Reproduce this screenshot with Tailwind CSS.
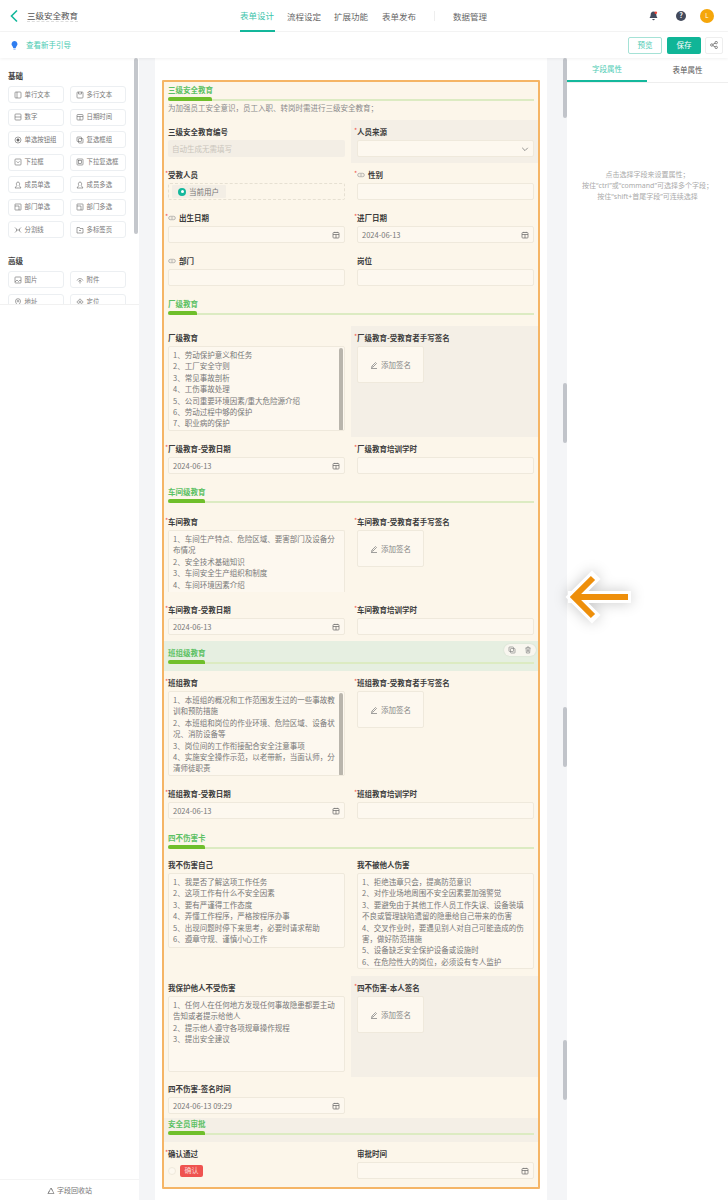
<!DOCTYPE html>
<html lang="zh">
<head>
  <meta charset="UTF-8" />
  <title>三级安全教育</title>
  <script src="https://cdn.jsdelivr.net/npm/@tailwindcss/browser@4"></script>
</head>
<body class="relative h-[1200px] overflow-hidden bg-white font-['Noto_Sans_CJK_SC','Noto_Sans',sans-serif] text-[#444]">

  <!-- top nav -->
  <header class="relative flex h-[32px] items-center border-b border-[#f5f5f5]">
    <svg class="ml-[9px] h-[14px] w-[10px]" viewBox="0 0 10 14" fill="none" stroke="#14b89c" stroke-width="1.6"><path d="M8 1.5 2.5 7 8 12.5"/></svg>
    <span class="ml-[8px] border-b border-dashed border-[#ddd] text-[8.5px] leading-[11px] text-[#555]">三级安全教育</span>
    <nav class="absolute left-[240px] top-0 flex h-[32px] items-center text-[8.5px] text-[#666]">
      <span class="flex h-[32px] w-[35px] items-center border-b-2 border-[#14b89c] whitespace-nowrap text-[#3cc4ab]">表单设计</span>
      <span class="ml-[12px] whitespace-nowrap">流程设定</span>
      <span class="ml-[13px] whitespace-nowrap">扩展功能</span>
      <span class="ml-[14px] whitespace-nowrap">表单发布</span>
      <span class="ml-[18px] h-[10px] w-px bg-[#eee]"></span>
      <span class="ml-[18px] whitespace-nowrap">数据管理</span>
    </nav>
    <div class="ml-auto mr-[14px] flex items-center">
      <svg class="h-[10px] w-[9px]" viewBox="0 0 9 10"><path d="M4.5.6C2.6.6 1.700 2 1.700 3.600c0 2-.9 2.800-1.200 3.400h8c-.3-.6-1.200-1.400-1.200-3.400C7.300 2 6.400.6 4.500.6ZM3.300 8a1.200 1.200 0 0 0 2.400 0Z" fill="#434a5c"/><circle cx="6.800" cy="1.800" r="1.300" fill="#f04134"/></svg>
      <span class="ml-[18px] flex h-[10px] w-[10px] items-center justify-center rounded-full bg-[#434a5c] text-[7px] font-bold leading-none text-white">?</span>
      <span class="ml-[14px] flex h-[14px] w-[14px] items-center justify-center rounded-full bg-[#f5a60a] text-[6px] text-white">L</span>
    </div>
  </header>

  <!-- sub bar -->
  <div class="relative z-10 flex h-[26px] items-center bg-white shadow-[0_1px_3px_rgba(0,0,0,0.06)]">
    <svg class="ml-[11px] h-[9px] w-[7px]" viewBox="0 0 7 9"><path d="M3.500 0a3 3 0 0 1 2 5.200L4.700 7H2.300L1.500 5.200A3 3 0 0 1 3.500 0Z" fill="#2f7df0"/><rect x="2.400" y="7.500" width="2.200" height="1.200" fill="#8ab4f0"/></svg>
    <span class="ml-[8px] text-[7.500px] text-[#4ccbb3]">查看新手引导</span>
    <div class="ml-auto mr-[5px] flex items-center">
      <span class="flex h-[17px] w-[34px] items-center justify-center rounded-[2px] border border-[#a5e2d6] text-[7.500px] text-[#4ccbb3]">预览</span>
      <span class="ml-[5px] flex h-[17px] w-[34px] items-center justify-center rounded-[2px] bg-[#10b597] text-[7.500px] text-white">保存</span>
      <span class="ml-[4px] flex h-[17px] w-[18px] items-center justify-center rounded-[2px] border border-[#eee]">
        <svg class="h-[8px] w-[8px]" viewBox="0 0 8 8" fill="none" stroke="#666" stroke-width=".8"><circle cx="1.800" cy="4" r="1.200"/><circle cx="6.200" cy="1.600" r="1.200"/><circle cx="6.200" cy="6.400" r="1.200"/><path d="M2.900 3.400 5.100 2.200M2.900 4.600l2.200 1.200"/></svg>
      </span>
    </div>
  </div>

  <main class="flex h-[1142px]">
    <!-- left panel -->
    <aside class="relative flex w-[139px] shrink-0 flex-col bg-white">
      <div class="h-[247px] overflow-hidden border-b border-[#f1f1f1] pl-[8px]">
        <h3 class="mt-[12px] h-[12px] text-[7.500px] font-bold leading-[12px] text-[#444]">基础</h3>
        <div id="basic" class="mt-[4px] grid w-[118px] grid-cols-[56px_56px] gap-x-[6px] gap-y-[5.500px]"></div>
        <h3 class="mt-[17px] h-[12px] text-[7.500px] font-bold leading-[12px] text-[#444]">高级</h3>
        <div id="advanced" class="mt-[4px] grid w-[118px] grid-cols-[56px_56px] gap-x-[6px] gap-y-[5.500px]"></div>
      </div>
      <span class="absolute right-[1px] top-0 h-[176px] w-[4px] rounded-full bg-[#c4c7cc]"></span>
      <div class="mt-auto flex h-[21px] items-center justify-center border-t border-[#f4f4f4] pt-[1px] text-[7px] text-[#777]">
        <svg class="mr-[2px] h-[8px] w-[8px]" viewBox="0 0 8 8" fill="none" stroke="#777" stroke-width=".7"><path d="M4 1 1 6.500h6ZM4 1l1.500 2.600M1 6.500l1.500-2.600"/></svg>字段回收站
      </div>
    </aside>

    <!-- canvas -->
    <section class="relative w-[428px] shrink-0 bg-[#f4f5f7] pl-[16px] pr-[20px]">
      <div class="h-full w-[392px] bg-white pl-[7px] pt-[22px]">
        <div id="form" class="w-[378px] rounded-[1px] border-2 border-[#f5b566] bg-[#fcf6ea]"></div>
      </div>
      <span class="absolute right-0 top-0 h-[60px] w-[4px] rounded-full bg-[#c1c4ca]"></span>
      <span class="absolute right-0 top-[325px] h-[60px] w-[4px] rounded-full bg-[#c1c4ca]"></span>
      <span class="absolute right-0 top-[649px] h-[60px] w-[4px] rounded-full bg-[#c1c4ca]"></span>
      <span class="absolute right-0 top-[982px] h-[60px] w-[4px] rounded-full bg-[#c1c4ca]"></span>
    </section>

    <!-- right panel -->
    <aside class="flex-1 bg-white">
      <div class="flex h-[25px] border-b border-[#eee] text-[7.500px]">
        <span class="flex w-[80px] items-center justify-center border-b-2 border-[#14b89c] text-[#4ccbb3]">字段属性</span>
        <span class="flex w-[81px] items-center justify-center text-[#555]">表单属性</span>
      </div>
      <p class="mt-[86px] whitespace-nowrap text-center font-['Noto_Sans','Noto_Sans_CJK_SC',sans-serif] text-[7px] leading-[11px] text-[#aaa]">点击选择字段来设置属性；<br>按住“ctrl”或“command”可选择多个字段；<br>按住“shift+首尾字段”可连续选择</p>
    </aside>
  </main>

  <!-- callout arrow over the screenshot -->
  <svg class="absolute left-[555px] top-[560px] h-[70px] w-[100px] overflow-visible" viewBox="0 0 100 70" fill="none">
    <path d="M37 19 19 37 37 55M19 37H70" stroke="#fff" stroke-width="12" stroke-linecap="square" style="filter:drop-shadow(0 0 7px rgba(0,0,0,.22))"/>
    <path d="M38 18 19 37 38 56M19 37H73" stroke="#ee8f0b" stroke-width="6"/>
  </svg>

  <script>
    const icons = {
      text: '<rect x="1" y="1" width="6" height="6" rx=".8"/><path d="M3 1v6"/>',
      area: '<rect x="1" y="1" width="6" height="6" rx=".8"/><path d="M2.500 1v2h3V1"/>',
      num: '<rect x="1" y="1" width="6" height="6" rx=".8"/><path d="M1 4h6"/>',
      date: '<rect x="1" y="1.500" width="6" height="5.500" rx=".8"/><path d="M1 3.500h6M4 3.500V7"/>',
      radio: '<circle cx="4" cy="4" r="3"/><circle cx="4" cy="4" r="1.200" fill="#666"/>',
      check: '<rect x="1" y="1" width="4.500" height="4.500" rx=".6"/><rect x="2.500" y="2.500" width="4.500" height="4.500" rx=".6"/>',
      select: '<rect x="1" y="1" width="6" height="6" rx=".8"/><path d="m2.500 3.300 1.500 1.500 1.500-1.500"/>',
      mselect: '<rect x="1" y="1" width="6" height="6" rx=".8"/><rect x="2.500" y="2.500" width="3" height="3"/>',
      user: '<path d="M2.800 4.500C2 3 2.300 1 4 1s2 2 1.200 3.500L7 7H1Z"/>',
      dept: '<rect x="1" y="1" width="6" height="6" rx=".4"/><path d="M1 3h4v4"/>',
      line: '<path d="M1 1.500 2.500 3v2L1 6.500M7 1.500 5.500 3v2L7 6.500M2.500 4h3"/>',
      tabs: '<path d="M1 1.500h2.500l.5 1h3V7H1Z"/><path d="M3 4.500h2"/>',
      image: '<rect x="1" y="1" width="6" height="6" rx=".6"/><path d="m1 6 2-2 1.500 1.500L6 4l1 1"/>',
      attach: '<path d="M1 4.500c1-2.500 5-2.500 6 0M2.500 5.500c.7-1.300 2.300-1.300 3 0M4 4v3.500"/>',
      addr: '<path d="M4 7.500C2.500 5.800 1.500 4.600 1.500 3.200a2.500 2.500 0 0 1 5 0C6.500 4.600 5.500 5.800 4 7.500Z"/><circle cx="4" cy="3.200" r=".8"/>',
      locate: '<path d="m4 .8 3.200 3.200L4 7.200.8 4Z"/><circle cx="4" cy="4" r="1"/>'
    };

    function paletteItem([name, icon]) {
      return `<div class="flex h-[17px] items-center rounded-[3px] border border-[#eceff2] pl-[5px] text-[6.400px] text-[#777]">
        <svg class="mr-[2.500px] h-[8px] w-[8px] shrink-0" viewBox="0 0 8 8" fill="none" stroke="#666" stroke-width=".6">${icons[icon]}</svg>
        <span class="whitespace-nowrap">${name}</span></div>`;
    }

    document.getElementById("basic").innerHTML = [
      ["单行文本", "text"], ["多行文本", "area"], ["数字", "num"], ["日期时间", "date"],
      ["单选按钮组", "radio"], ["复选框组", "check"], ["下拉框", "select"], ["下拉复选框", "mselect"],
      ["成员单选", "user"], ["成员多选", "user"], ["部门单选", "dept"], ["部门多选", "dept"],
      ["分割线", "line"], ["多标签页", "tabs"]
    ].map(paletteItem).join("");

    document.getElementById("advanced").innerHTML = [
      ["图片", "image"], ["附件", "attach"], ["地址", "addr"], ["定位", "locate"]
    ].map(paletteItem).join("");

    const calIcon = `<svg class="absolute right-[4px] top-[4px] h-[8px] w-[8px]" viewBox="0 0 8 8" fill="none" stroke="#666" stroke-width=".7"><rect x="1" y="1.500" width="6" height="5.500" rx=".8"/><path d="M1 3.500h6M4 3.500V7M2.800.8v1M5.200.8v1"/></svg>`;
    const linkIcon = `<svg class="mr-[3px] h-[8px] w-[8px]" viewBox="0 0 8 8" fill="none" stroke="#999" stroke-width=".7"><rect x=".7" y="2.300" width="6.600" height="3.400" rx="1.700"/><path d="M2.800 4h2.400"/></svg>`;

    function label(text, req, link) {
      return `<div class="relative flex h-[11px] items-center whitespace-nowrap text-[7.500px] font-bold text-[#3d3d3d]">
        ${req ? '<span class="absolute left-[-3px] top-[-1px] text-[7px] font-normal text-[#f0584c]">*</span>' : ''}
        ${link ? linkIcon : ''}${text}</div>`;
    }

    function cellWrap(side, height, hl, inner) {
      const pad = side === "l" ? "pl-[4px] pr-[6px]" : "pl-[6px] pr-[4px]";
      return `<div class="${height} ${pad} ${hl ? "bg-[#f4efe6]" : ""} pt-[6px]">${inner}</div>`;
    }

    const box = "relative mt-[3px] h-[17px] rounded-[2px] border border-[#efe9dc] bg-[#fdf8ef] text-[7.500px] leading-[15px]";

    const field = (side, text, o = {}) => cellWrap(side, "h-[43px]", o.hl, label(text, o.req, o.link) +
      `<div class="${box} pl-[4px] text-[#777]">${o.value || ""}${o.date ? calIcon : ""}${o.inner || ""}</div>`);

    function sign(side, height, text, hl) {
      return cellWrap(side, height, hl, label(text, true) +
        `<div class="mt-[3px] flex h-[37px] w-[67px] items-center justify-center rounded-[2px] border border-[#efe9dc] bg-[#fdf8ef] text-[7.500px] text-[#888]">
          <svg class="mr-[3px] h-[8px] w-[8px]" viewBox="0 0 8 8" fill="none" stroke="#888" stroke-width=".8"><path d="M1.500 6.500 2 5l3.500-3.500 1 1L3 6ZM1 7.500h6"/></svg>添加签名</div>`);
    }

    function area(side, height, text, lines, boxH, o = {}) {
      const bar = o.bar ? '<span class="absolute right-[1px] top-[1px] h-[83px] w-[4px] rounded-full bg-[#b9b5ac]"></span>' : "";
      const edge = o.open ? "border-b-0 rounded-b-none" : "";
      return cellWrap(side, height, false, label(text, o.req) +
        `<div class="relative mt-[3px] ${boxH} ${edge} overflow-hidden rounded-[2px] border border-[#efe9dc] bg-[#fdf8ef] px-[4px] pt-[2px] text-[7.500px] leading-[11.400px] whitespace-nowrap text-[#777]">${lines.join("<br>")}${bar}</div>`);
    }

    function section(title, barW, o = {}) {
      return `<div class="${o.height} ${o.hl || ""} ${o.top || "pt-[6px]"} col-span-2 relative px-[4px]">
        <div class="flex h-[11px] items-center text-[7.500px] font-bold text-[#5cc164]">${title}</div>
        <div class="relative mt-[2px] h-[4px] w-[366px]">
          <span class="absolute bottom-0 left-0 h-[2px] w-full bg-[#dcebc2]"></span>
          <span class="absolute bottom-0 left-0 h-[4px] ${barW} rounded-t-[3px] rounded-bl-[3px] bg-[#6fbf2b]"></span>
        </div>
        ${o.extra || ""}
      </div>`;
    }

    const actions = `<div class="absolute right-[2px] top-[3px] flex h-[12px] w-[32px] items-center justify-around rounded-full bg-[#f8f6ef] shadow-[0_0_2px_rgba(0,0,0,0.1)]">
      <svg class="h-[8px] w-[8px]" viewBox="0 0 8 8" fill="none" stroke="#888" stroke-width=".7"><rect x="1" y="1" width="4.500" height="4.500" rx=".6"/><rect x="2.500" y="2.500" width="4.500" height="4.500" rx=".6"/></svg>
      <svg class="h-[8px] w-[8px]" viewBox="0 0 8 8" fill="none" stroke="#888" stroke-width=".7"><path d="M1.500 2h5M3 2V1h2v1M2 2l.4 5h3.200L6 2M3.500 3.300v2.500M4.500 3.300v2.500"/></svg>
    </div>`;

    const chevron = `<svg class="absolute right-[4px] top-[4px] h-[8px] w-[8px]" viewBox="0 0 8 8" fill="none" stroke="#777" stroke-width=".8"><path d="m1.200 2.800 2.800 2.800 2.800-2.800"/></svg>`;

    document.getElementById("form").innerHTML = `<div class="grid grid-cols-2">` + [
      section("三级安全教育", "w-[44px]", {
        height: "h-[38px]", top: "pt-[2px]",
        extra: '<div class="mt-[1px] h-[11px] text-[7.500px] leading-[11px] text-[#8a8a8a]">为加强员工安全意识，员工入职、转岗时需进行三级安全教育；</div>'
      }),
      cellWrap("l", "h-[43px]", false, label("三级安全教育编号") + '<div class="mt-[3px] h-[17px] rounded-[2px] bg-[#f3eee5] pl-[4px] text-[7.500px] leading-[17px] text-[#c9c5bc]">自动生成无需填写</div>'),
      field("r", "人员来源", { req: true, hl: true, inner: chevron }),
      cellWrap("l", "h-[43px]", false, label("受教人员", true) + `<div class="mt-[3px] flex h-[17px] items-center rounded-[2px] border border-dashed border-[#e6e0d2] pl-[3px]"><span class="flex h-[13px] w-[54px] items-center rounded-[1px] bg-[#f3eee5] pl-[6px] text-[7.500px] text-[#777]"><span class="mr-[3px] flex h-[8px] w-[8px] items-center justify-center rounded-full bg-[#14b89c]"><span class="h-[3px] w-[3px] rounded-full bg-white"></span></span>当前用户</span></div>`),
      field("r", "性别", { req: true, link: true }),
      field("l", "出生日期", { req: true, link: true, date: true }),
      field("r", "进厂日期", { req: true, date: true, value: "2024-06-13" }),
      field("l", "部门", { link: true }),
      field("r", "岗位"),

      section("厂级教育", "w-[29px]", { height: "h-[34px]" }),
      area("l", "h-[111px]", "厂级教育", ["1、劳动保护意义和任务", "2、工厂安全守则", "3、常见事故剖析", "4、工伤事故处理", "5、公司重要环境因素/重大危险源介绍", "6、劳动过程中够的保护", "7、职业病的保护"], "h-[85px]", { bar: true }),
      sign("r", "h-[111px]", "厂级教育-受教育者手写签名", true),
      field("l", "厂级教育-受教日期", { req: true, date: true, value: "2024-06-13" }),
      field("r", "厂级教育培训学时", { req: true }),

      section("车间级教育", "w-[37px]", { height: "h-[30px]" }),
      area("l", "h-[88px]", "车间教育", ["1、车间生产特点、危险区域、要害部门及设备分", "布情况", "2、安全技术基础知识", "3、车间安全生产组织和制度", "4、车间环境因素介绍"], "h-[62px]", { req: true, open: true }),
      sign("r", "h-[88px]", "车间教育-受教育者手写签名"),
      field("l", "车间教育-受教日期", { req: true, date: true, value: "2024-06-13" }),
      field("r", "车间教育培训学时", { req: true }),

      section("班组级教育", "w-[37px]", { height: "h-[30px]", hl: "bg-[#e6efe1]", extra: actions }),
      area("l", "h-[111px]", "班组教育", ["1、本班组的概况和工作范围发生过的一些事故教", "训和预防措施", "2、本班组和岗位的作业环境、危险区域、设备状", "况、消防设备等", "3、岗位间的工作衔接配合安全注意事项", "4、实施安全操作示范，以老带新，当面认师，分", "清师徒职责"], "h-[85px]", { req: true, bar: true }),
      sign("r", "h-[111px]", "班组教育-受教育者手写签名"),
      field("l", "班组教育-受教日期", { req: true, date: true, value: "2024-06-13" }),
      field("r", "班组教育培训学时", { req: true }),

      section("四不伤害卡", "w-[37px]", { height: "h-[28px]", top: "pt-[7px]" }),
      area("l", "h-[123px]", "我不伤害自己", ["1、我是否了解这项工作任务", "2、这项工作有什么不安全因素", "3、要有严谨得工作态度", "4、弄懂工作程序，严格按程序办事", "5、出现问题时停下来思考，必要时请求帮助", "6、遵章守规、谨慎小心工作"], "h-[75px]"),
      area("r", "h-[123px]", "我不被他人伤害", ["1、拒绝违章只会，提高防范意识", "2、对作业场地周围不安全因素要加强警觉", "3、要避免由于其他工作人员工作失误、设备装填", "不良或管理缺陷遗留的隐患给自己带来的伤害", "4、交叉作业时，要遇见别人对自己可能造成的伤", "害，做好防范措施", "5、设备缺乏安全保护设备或设施时", "6、在危险性大的岗位，必须设有专人监护"], "h-[96px]"),
      area("l", "h-[101px]", "我保护他人不受伤害", ["1、任何人在任何地方发现任何事故隐患都要主动", "告知或者提示给他人", "2、提示他人遵守各项规章操作规程", "3、提出安全建议"], "h-[76px]"),
      sign("r", "h-[101px]", "四不伤害-本人签名", true),
      field("l", "四不伤害-签名时间", { date: true, value: "2024-06-13 09:29" }).replace("h-[43px]", "h-[41px]"),
      '<div class="h-[41px]"></div>',

      section("安全员审批", "w-[37px]", { height: "h-[24px]", hl: "bg-[#f4efe6]", top: "pt-0" }),
      cellWrap("l", "h-[45px]", false, label("确认通过", true) + '<div class="mt-[3px] flex h-[17px] items-center"><span class="h-[8px] w-[8px] rounded-full border border-[#efe9dc] bg-[#fdf8ef]"></span><span class="ml-[4px] flex h-[12px] w-[23px] items-center justify-center rounded-[2px] bg-[#ef5350] text-[7px] text-[#fbd9d6]">确认</span></div>'),
      field("r", "审批时间", { date: true }).replace("h-[43px]", "h-[45px]")
    ].join("") + `</div>`;
  </script>
</body>
</html>
